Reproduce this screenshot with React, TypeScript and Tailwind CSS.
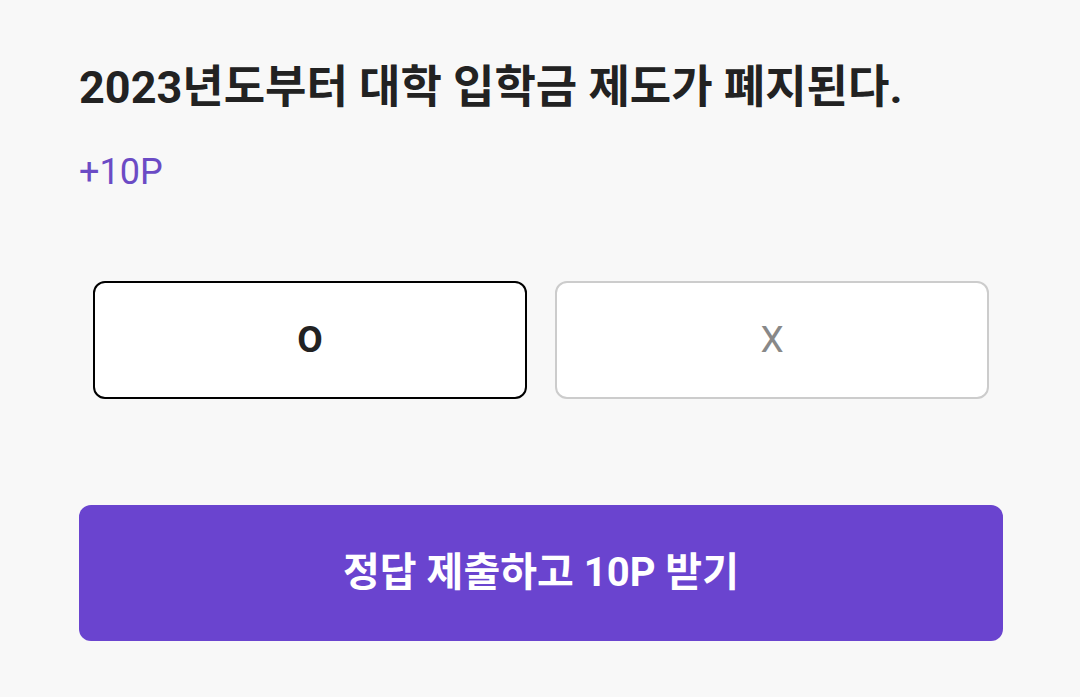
import React, { useState } from 'react';

const FONT = "font-['Roboto','Noto_Sans_CJK_KR',sans-serif]";

export default function App() {
    const [answer, setAnswer] = useState<'O' | 'X'>('O');

    return (
        <div className={`min-h-[697px] bg-[#f8f8f8] ${FONT}`}>
            <div className="pl-[79px] pr-[77px] pt-[56px]">
                <h1 className="text-[45px] leading-[64px] font-bold text-[#222222]">
                    2023년도부터 대학 입학금 제도가 폐지된다.
                </h1>
                <p className="mt-[30px] text-[36px] leading-[44px] text-[#6b4bc5]">+10P</p>

                <div className="grid grid-cols-2 gap-[28px] px-[14px] mt-[87px]">
                    <button
                        onClick={() => setAnswer('O')}
                        className={`h-[118px] rounded-[12px] bg-white text-[37px] ${answer === 'O' ? 'border-2 border-black font-bold text-[#222222]' : 'border-2 border-[#cccccc] text-[#888888]'}`}
                    >
                        O
                    </button>
                    <button
                        onClick={() => setAnswer('X')}
                        className={`h-[118px] rounded-[12px] bg-white text-[37px] ${answer === 'X' ? 'border-2 border-black font-bold text-[#222222]' : 'border-2 border-[#cccccc] text-[#888888]'}`}
                    >
                        X
                    </button>
                </div>

                <button className="mt-[106px] w-full h-[136px] rounded-[12px] bg-[#6a44cf] text-white text-[40px] font-bold">
                    정답 제출하고 10P 받기
                </button>
            </div>
        </div>
    );
}
